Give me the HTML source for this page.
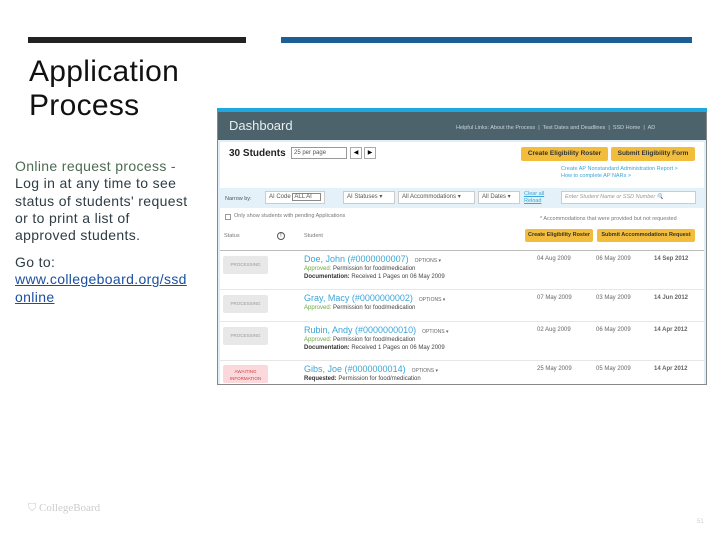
<!DOCTYPE html>
<html><head><style>
*{margin:0;padding:0;box-sizing:border-box}
body{width:720px;height:540px;background:#fff;position:relative;overflow:hidden;font-family:"Liberation Sans",sans-serif}
.a{position:absolute}
.t{font-size:7px;color:#555;white-space:nowrap}
.btn{position:absolute;background:#f2bd3c;border-radius:2px;font-size:6.5px;font-weight:bold;color:#333;text-align:center;line-height:14px;height:14px}
.proc{position:absolute;left:223px;width:45px;height:18px;background:#e8e8e8;border-radius:2px;font-size:4.5px;color:#999;text-align:center;line-height:18px}
.nm{position:absolute;left:304px;font-size:9px;color:#3aa5d8;white-space:nowrap}
.nm span{font-size:5px;color:#666;margin-left:6px}
.d{position:absolute;font-size:6px;color:#666;white-space:nowrap}
.s{position:absolute;left:304px;font-size:6px;color:#444;white-space:nowrap}
.s b{color:#6aa83a;font-weight:normal}
.hr{position:absolute;left:220px;width:484px;height:1px;background:#e6e6e6}
.lt{position:absolute;left:15px;font-size:14px;line-height:17.3px;letter-spacing:0.35px;color:#2e3d45;white-space:nowrap}
</style></head><body>
<div class="a" style="left:28px;top:37px;width:218px;height:6px;background:#222"></div>
<div class="a" style="left:281px;top:37px;width:411px;height:6px;background:#1a5f96"></div>
<div class="a" style="left:29px;top:55px;font-size:30px;line-height:34px;color:#111;letter-spacing:0.3px">Application<br>Process</div>
<div class="lt" style="top:158px"><span style="color:#4d6a55">Online request process -</span><br>Log in at any time to see<br>status of students' request<br>or to print a list of<br>approved students.</div>
<div class="lt" style="top:254px">Go to:<br><u style="color:#1a4fa0">www.collegeboard.org/ssd</u><br><u style="color:#1a4fa0">online</u></div>

<div class="a" style="left:217px;top:108px;width:490px;height:277px;background:#dfeef7;border:1px solid #888"></div>
<div class="a" style="left:217px;top:108px;width:490px;height:4px;background:#1fa8e0"></div>
<div class="a" style="left:218px;top:112px;width:488px;height:28px;background:#4d636c"></div>
<div class="a" style="left:229px;top:118px;font-size:13px;color:#e8eef0">Dashboard</div>
<div class="a" style="left:456px;top:125px;font-size:5.5px;color:#c9d3d6;white-space:nowrap">Helpful Links: About the Process &nbsp;|&nbsp; Test Dates and Deadlines &nbsp;|&nbsp; SSD Home &nbsp;|&nbsp; AD</div>
<div class="a" style="left:220px;top:142px;width:484px;height:242px;background:#fff"></div>
<div class="a" style="left:229px;top:148px;font-size:10px;font-weight:bold;color:#222">30 Students</div>
<div class="a" style="left:291px;top:147px;width:56px;height:12px;border:1px solid #999;font-size:6px;line-height:10px;padding-left:2px;color:#555">25 per page</div>
<div class="a" style="left:350px;top:147px;width:12px;height:12px;border:1px solid #aaa;font-size:6px;text-align:center;line-height:10px">◀</div>
<div class="a" style="left:364px;top:147px;width:12px;height:12px;border:1px solid #aaa;font-size:6px;text-align:center;line-height:10px">▶</div>
<div class="btn" style="left:521px;top:147px;width:87px">Create Eligibility Roster</div>
<div class="btn" style="left:611px;top:147px;width:84px">Submit Eligibility Form</div>
<div class="a" style="left:561px;top:166px;font-size:5.5px;color:#3aa5d8;line-height:7px;white-space:nowrap">Create AP Nonstandard Administration Report &gt;<br>How to complete AP NARs &gt;</div>
<div class="a" style="left:220px;top:188px;width:484px;height:20px;background:#e4f1f8"></div>
<div class="t a" style="left:225px;top:196px;font-size:5.5px">Narrow by:</div>
<div class="a" style="left:265px;top:191px;width:60px;height:13px;background:#fff;border:1px solid #ccc;font-size:6px;line-height:11px;padding-left:3px;color:#555">AI Code <span style="border:1px solid #888;padding:0 8px 0 1px">ALL AI</span></div>
<div class="a" style="left:343px;top:191px;width:52px;height:13px;background:#fff;border:1px solid #ccc;font-size:6px;line-height:11px;padding-left:3px;color:#555">AI Statuses ▾</div>
<div class="a" style="left:398px;top:191px;width:77px;height:13px;background:#fff;border:1px solid #ccc;font-size:6px;line-height:11px;padding-left:3px;color:#555">All Accommodations ▾</div>
<div class="a" style="left:478px;top:191px;width:42px;height:13px;background:#fff;border:1px solid #ccc;font-size:6px;line-height:11px;padding-left:3px;color:#555">All Dates ▾</div>
<div class="a" style="left:524px;top:191px;font-size:5.5px;color:#3aa5d8;line-height:7px;text-decoration:underline">Clear all<br>Reload</div>
<div class="a" style="left:561px;top:191px;width:135px;height:13px;background:#fff;border:1px solid #ccc;font-size:5.5px;line-height:11px;padding-left:3px;color:#999;font-style:italic">Enter Student Name or SSD Number 🔍</div>
<div class="a" style="left:225px;top:214px;width:6px;height:6px;border:1px solid #999"></div>
<div class="t a" style="left:234px;top:213px;font-size:5.5px;color:#777">Only show students with pending Applications</div>
<div class="t a" style="left:540px;top:216px;font-size:5.5px;color:#777">* Accommodations that were provided but not requested</div>
<div class="btn" style="left:525px;top:229px;width:68px;height:13px;line-height:13px;font-size:5.5px">Create Eligibility Roster</div>
<div class="btn" style="left:597px;top:229px;width:98px;height:13px;line-height:13px;font-size:5.5px">Submit Accommodations Request</div>
<div class="t a" style="left:224px;top:233px;font-size:5.5px;color:#777">Status</div>
<div class="a" style="left:277px;top:232px;width:8px;height:8px;border:1px solid #555;border-radius:50%;font-size:5px;text-align:center;line-height:6px">!</div>
<div class="t a" style="left:304px;top:233px;font-size:5.5px;color:#777">Student</div>
<div class="hr" style="top:250px;background:#bbb"></div>

<div class="proc" style="top:256px">PROCESSING</div>
<div class="nm" style="top:254px">Doe, John (#0000000007)<span>OPTIONS ▾</span></div>
<div class="s" style="top:266px"><b>Approved:</b> Permission for food/medication</div>
<div class="s" style="top:274px"><b style="color:#333;font-weight:bold">Documentation:</b> Received 1 Pages on 06 May 2009</div>
<div class="d" style="left:537px;top:256px">04 Aug 2009</div><div class="d" style="left:596px;top:256px">06 May 2009</div><div class="d" style="left:654px;top:256px;font-weight:bold">14 Sep 2012</div>
<div class="hr" style="top:289px"></div>
<div class="proc" style="top:295px">PROCESSING</div>
<div class="nm" style="top:293px">Gray, Macy (#0000000002)<span>OPTIONS ▾</span></div>
<div class="s" style="top:305px"><b>Approved:</b> Permission for food/medication</div>
<div class="d" style="left:537px;top:295px">07 May 2009</div><div class="d" style="left:596px;top:295px">03 May 2009</div><div class="d" style="left:654px;top:295px;font-weight:bold">14 Jun 2012</div>
<div class="hr" style="top:321px"></div>
<div class="proc" style="top:327px">PROCESSING</div>
<div class="nm" style="top:325px">Rubin, Andy (#0000000010)<span>OPTIONS ▾</span></div>
<div class="s" style="top:337px"><b>Approved:</b> Permission for food/medication</div>
<div class="s" style="top:345px"><b style="color:#333;font-weight:bold">Documentation:</b> Received 1 Pages on 06 May 2009</div>
<div class="d" style="left:537px;top:327px">02 Aug 2009</div><div class="d" style="left:596px;top:327px">06 May 2009</div><div class="d" style="left:654px;top:327px;font-weight:bold">14 Apr 2012</div>
<div class="hr" style="top:360px"></div>
<div class="proc" style="top:365px;background:#fbd8dc;color:#c44;line-height:7px;padding-top:3px">AWAITING<br>INFORMATION</div>
<div class="nm" style="top:364px">Gibs, Joe (#0000000014)<span>OPTIONS ▾</span></div>
<div class="s" style="top:376px"><b style="color:#333;font-weight:bold">Requested:</b> Permission for food/medication</div>
<div class="d" style="left:537px;top:366px">25 May 2009</div><div class="d" style="left:596px;top:366px">05 May 2009</div><div class="d" style="left:654px;top:366px;font-weight:bold">14 Apr 2012</div>

<div class="a" style="left:28px;top:502px;font-size:11px;color:#ccc;font-family:'Liberation Serif',serif">⛉ CollegeBoard</div>
<div class="a" style="left:697px;top:519px;font-size:6px;color:#ccc">51</div>
</body></html>
